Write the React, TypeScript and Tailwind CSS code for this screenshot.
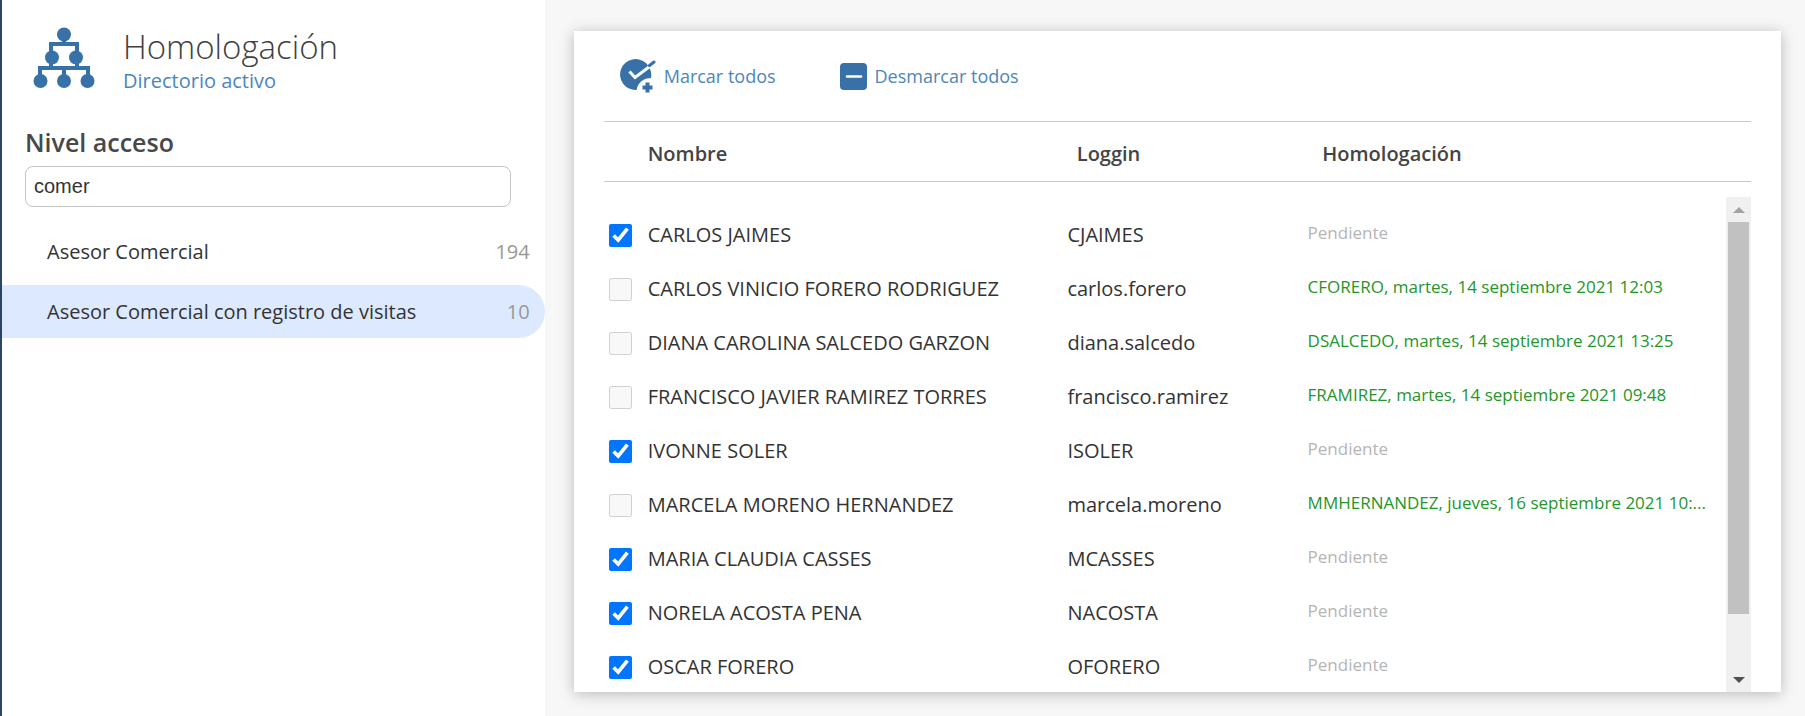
import { useState } from "react";

type User = { name: string; login: string; status?: string; checked: boolean };

const levels = [
  { label: "Asesor Comercial", count: 194 },
  { label: "Asesor Comercial con registro de visitas", count: 10 },
];

const initialUsers: User[] = [
  { name: "CARLOS JAIMES", login: "CJAIMES", checked: true },
  { name: "CARLOS VINICIO FORERO RODRIGUEZ", login: "carlos.forero", status: "CFORERO, martes, 14 septiembre 2021 12:03", checked: false },
  { name: "DIANA CAROLINA SALCEDO GARZON", login: "diana.salcedo", status: "DSALCEDO, martes, 14 septiembre 2021 13:25", checked: false },
  { name: "FRANCISCO JAVIER RAMIREZ TORRES", login: "francisco.ramirez", status: "FRAMIREZ, martes, 14 septiembre 2021 09:48", checked: false },
  { name: "IVONNE SOLER", login: "ISOLER", checked: true },
  { name: "MARCELA MORENO HERNANDEZ", login: "marcela.moreno", status: "MMHERNANDEZ, jueves, 16 septiembre 2021 10:...", checked: false },
  { name: "MARIA CLAUDIA CASSES", login: "MCASSES", checked: true },
  { name: "NORELA ACOSTA PENA", login: "NACOSTA", checked: true },
  { name: "OSCAR FORERO", login: "OFORERO", checked: true },
];

function TreeIcon() {
  return (
    <svg className="size-[62px] shrink-0" viewBox="0 0 62 62" fill="#3871a8" aria-hidden="true">
      <path d="M18 24V17H44V24M31 10V17M18 30V41M44 30V41M7 52V41H55V52M31 41V52" fill="none" stroke="#3871a8" strokeWidth="4" />
      <circle cx="31" cy="7.5" r="7" />
      <circle cx="19" cy="30.500" r="7" />
      <circle cx="43" cy="30.500" r="7" />
      <circle cx="7.500" cy="54" r="7" />
      <circle cx="31" cy="54" r="7" />
      <circle cx="54.500" cy="54" r="7" />
    </svg>
  );
}

function MarkAllIcon() {
  return (
    <svg className="h-[34px] w-9 shrink-0" viewBox="0 0 36 34" aria-hidden="true">
      <path d="M16.500 31A15.500 15.500 0 1 1 26.500 4.500L29 8A15.500 15.500 0 0 1 31 19C24 19 18 23 16.500 31Z" fill="#3871a8" />
      <path d="M9.500 12.500L15 18.500L29 8" fill="none" stroke="#fff" strokeWidth="3" />
      <path d="M29.500 6.500L34 3" stroke="#3871a8" strokeWidth="3" strokeLinecap="round" />
      <path d="M27.500 23.500V33.500M22.500 28.500H32.500" stroke="#3871a8" strokeWidth="4" />
    </svg>
  );
}

function UnmarkAllIcon() {
  return (
    <svg className="size-[27px] shrink-0" viewBox="0 0 27 27" aria-hidden="true">
      <rect width="27" height="27" rx="4" fill="#3871a8" />
      <path d="M7 13.500H21" stroke="#fff" strokeWidth="2.500" strokeLinecap="round" />
    </svg>
  );
}

function Columns() {
  return (
    <colgroup>
      <col className="w-11" />
      <col className="w-[37.4%]" />
      <col className="w-[21.4%]" />
      <col />
    </colgroup>
  );
}

export default function App() {
  const [query, setQuery] = useState("comer");
  const [active, setActive] = useState(1);
  const [users, setUsers] = useState(initialUsers);

  const setAll = (checked: boolean) =>
    setUsers(users.map((u) => (u.status ? u : { ...u, checked })));
  const toggle = (login: string) =>
    setUsers(users.map((u) => (u.login === login ? { ...u, checked: !u.checked } : u)));

  return (
    <div className="flex h-screen border-l-2 border-[#2b4661] bg-[#f7f7f7] font-['Open_Sans','Noto_Sans',sans-serif] text-[#333]">
      <aside className="w-[30.1%] shrink-0 bg-white">
        <header className="flex items-start gap-7 pt-[27px] pl-[31px]">
          <TreeIcon />
          <div>
            <h1 className="text-[33px] leading-10 font-light text-[#404040]">Homologación</h1>
            <p className="text-xl leading-7 text-[#4c86bc]">Directorio activo</p>
          </div>
        </header>
        <div className="pt-[29px] pr-[34px] pl-[23px]">
          <label htmlFor="level" className="block text-[25px] leading-9 font-semibold text-[#484848]">
            Nivel acceso
          </label>
          <input
            id="level"
            value={query}
            onChange={(e) => setQuery(e.target.value)}
            className="mt-1.5 block h-[41px] w-full rounded-lg border border-[#c4c4c4] bg-white px-2 font-['Liberation_Sans',sans-serif] text-xl text-[#333] outline-none"
          />
        </div>
        <nav className="mt-[18px] flex flex-col gap-[7px]">
          {levels.map((level, i) => (
            <button
              key={level.label}
              onClick={() => setActive(i)}
              className={
                "flex h-[53px] items-center justify-between rounded-r-full pr-[15px] pl-[45px] text-xl " +
                (i === active ? "bg-[#dde9ff]" : "bg-white")
              }
            >
              <span>{level.label}</span>
              <span className="text-[#999]">{level.count}</span>
            </button>
          ))}
        </nav>
      </aside>

      <main className="flex min-w-0 flex-1 flex-col pt-[31px] pr-6 pb-6 pl-[29px]">
        <section className="flex min-h-0 flex-1 flex-col bg-white px-[30px] shadow-[0_2px_14px_rgba(0,0,0,0.25)]">
          <div className="flex h-[90px] shrink-0 items-center gap-16 pl-4 text-lg text-[#4c86bc]">
            <button onClick={() => setAll(true)} className="flex items-center gap-2">
              <MarkAllIcon />
              Marcar todos
            </button>
            <button onClick={() => setAll(false)} className="flex items-center gap-2">
              <UnmarkAllIcon />
              Desmarcar todos
            </button>
          </div>
          <table className="w-full shrink-0 table-fixed border-y border-[#c8c8c8] text-left text-xl">
            <Columns />
            <thead>
              <tr className="h-[60px] text-[#444]">
                <td />
                <th className="pt-1 font-semibold">Nombre</th>
                <th className="pt-1 font-semibold">Loggin</th>
                <th className="pt-1 font-semibold">Homologación</th>
              </tr>
            </thead>
          </table>
          <div className="mt-[15px] flex min-h-0 flex-1">
            <div className="min-w-0 flex-1 overflow-y-auto pt-[11px] [scrollbar-width:none]">
              <table className="w-full table-fixed text-xl">
                <Columns />
                <tbody>
                  {users.map((u) => (
                    <tr key={u.login} className="h-[54px]">
                      <td className="pl-[5px]">
                        <input
                          id={u.login}
                          type="checkbox"
                          checked={u.checked}
                          disabled={!!u.status}
                          onChange={() => toggle(u.login)}
                          className="block size-[23px]"
                        />
                      </td>
                      <td className="whitespace-nowrap">
                        <label htmlFor={u.login}>{u.name}</label>
                      </td>
                      <td>{u.login}</td>
                      <td className={"truncate pr-1 pb-1 text-[17px] " + (u.status ? "text-[#24962a]" : "text-[#b5b5b5]")}>
                        {u.status ?? "Pendiente"}
                      </td>
                    </tr>
                  ))}
                </tbody>
              </table>
            </div>
            <div className="flex w-[25px] shrink-0 flex-col items-stretch bg-[#f0f0f0]">
              <button aria-label="Subir" className="flex h-[25px] items-center justify-center">
                <svg className="h-[6px] w-3" viewBox="0 0 12 6" aria-hidden="true">
                  <path d="M0 6L6 0L12 6Z" fill="#a3a3a3" />
                </svg>
              </button>
              <div className="flex-1 px-[2px]">
                <div className="h-[88%] bg-[#c1c1c1]" />
              </div>
              <button aria-label="Bajar" className="flex h-[25px] items-center justify-center">
                <svg className="h-[6px] w-3" viewBox="0 0 12 6" aria-hidden="true">
                  <path d="M0 0L6 6L12 0Z" fill="#505050" />
                </svg>
              </button>
            </div>
          </div>
        </section>
      </main>
    </div>
  );
}
